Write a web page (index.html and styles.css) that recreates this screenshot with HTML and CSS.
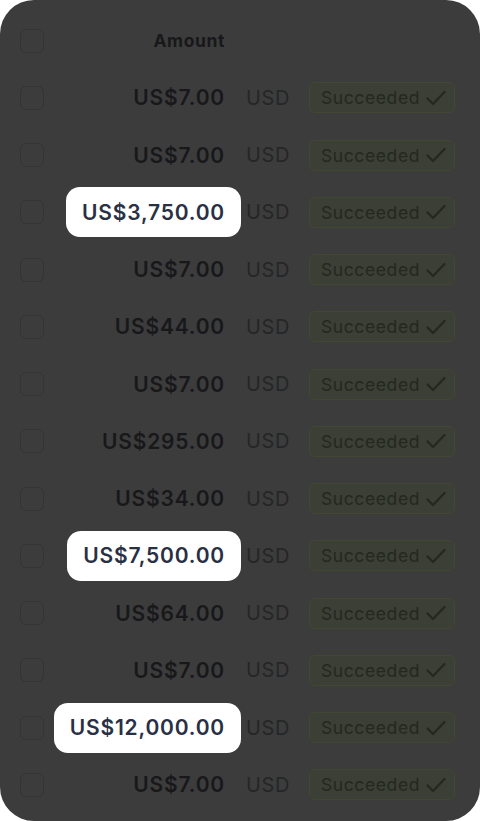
FILE: index.html
```html
<!DOCTYPE html>
<html lang="en">
<head>
  <meta charset="UTF-8" />
  <meta name="viewport" content="width=device-width, initial-scale=1" />
  <title>Payments</title>
  <link rel="stylesheet" href="styles.css">
</head>
<body>
  <div class="sheet">
    <div class="row head">
      <span class="check"></span>
      <span class="amount"><b>Amount</b></span>
      <span></span>
      <span></span>
    </div>

    <div class="row"><span class="check"></span><span class="amount"><b>US$7.00</b></span><span class="cur">USD</span><span class="status">Succeeded <svg class="tick" viewBox="0 0 20 16"><path d="M1.5 8.5 L7 14 L18.5 2"/></svg></span></div>
    <div class="row"><span class="check"></span><span class="amount"><b>US$7.00</b></span><span class="cur">USD</span><span class="status">Succeeded <svg class="tick" viewBox="0 0 20 16"><path d="M1.5 8.5 L7 14 L18.5 2"/></svg></span></div>
    <div class="row"><span class="check"></span><span class="amount"><b class="hl">US$3,750.00</b></span><span class="cur">USD</span><span class="status">Succeeded <svg class="tick" viewBox="0 0 20 16"><path d="M1.5 8.5 L7 14 L18.5 2"/></svg></span></div>
    <div class="row"><span class="check"></span><span class="amount"><b>US$7.00</b></span><span class="cur">USD</span><span class="status">Succeeded <svg class="tick" viewBox="0 0 20 16"><path d="M1.5 8.5 L7 14 L18.5 2"/></svg></span></div>
    <div class="row"><span class="check"></span><span class="amount"><b>US$44.00</b></span><span class="cur">USD</span><span class="status">Succeeded <svg class="tick" viewBox="0 0 20 16"><path d="M1.5 8.5 L7 14 L18.5 2"/></svg></span></div>
    <div class="row"><span class="check"></span><span class="amount"><b>US$7.00</b></span><span class="cur">USD</span><span class="status">Succeeded <svg class="tick" viewBox="0 0 20 16"><path d="M1.5 8.5 L7 14 L18.5 2"/></svg></span></div>
    <div class="row"><span class="check"></span><span class="amount"><b>US$295.00</b></span><span class="cur">USD</span><span class="status">Succeeded <svg class="tick" viewBox="0 0 20 16"><path d="M1.5 8.5 L7 14 L18.5 2"/></svg></span></div>
    <div class="row"><span class="check"></span><span class="amount"><b>US$34.00</b></span><span class="cur">USD</span><span class="status">Succeeded <svg class="tick" viewBox="0 0 20 16"><path d="M1.5 8.5 L7 14 L18.5 2"/></svg></span></div>
    <div class="row"><span class="check"></span><span class="amount"><b class="hl">US$7,500.00</b></span><span class="cur">USD</span><span class="status">Succeeded <svg class="tick" viewBox="0 0 20 16"><path d="M1.5 8.5 L7 14 L18.5 2"/></svg></span></div>
    <div class="row"><span class="check"></span><span class="amount"><b>US$64.00</b></span><span class="cur">USD</span><span class="status">Succeeded <svg class="tick" viewBox="0 0 20 16"><path d="M1.5 8.5 L7 14 L18.5 2"/></svg></span></div>
    <div class="row"><span class="check"></span><span class="amount"><b>US$7.00</b></span><span class="cur">USD</span><span class="status">Succeeded <svg class="tick" viewBox="0 0 20 16"><path d="M1.5 8.5 L7 14 L18.5 2"/></svg></span></div>
    <div class="row"><span class="check"></span><span class="amount"><b class="hl">US$12,000.00</b></span><span class="cur">USD</span><span class="status">Succeeded <svg class="tick" viewBox="0 0 20 16"><path d="M1.5 8.5 L7 14 L18.5 2"/></svg></span></div>
    <div class="row"><span class="check"></span><span class="amount"><b>US$7.00</b></span><span class="cur">USD</span><span class="status">Succeeded <svg class="tick" viewBox="0 0 20 16"><path d="M1.5 8.5 L7 14 L18.5 2"/></svg></span></div>
  </div>
</body>
</html>
```

FILE: styles.css
```css
body {
  margin: 0;
  background: #fff;
  font-family: Inter, "Noto Sans", sans-serif;
}

.sheet {
  width: 480px;
  height: 821px;
  box-sizing: border-box;
  padding-top: 12px;
  background: #3c3c3c;
  border-radius: 34px;
  overflow: hidden;
}

.row {
  display: grid;
  grid-template-columns: 24px 181px 84px 146px;
  align-items: center;
  height: 57.25px;
  padding-left: 20px;
}

.row .cur {
  padding-left: 21px;
  font-size: 20px;
  letter-spacing: 0.6px;
  color: #252628;
}

.check {
  width: 24px;
  height: 24px;
  box-sizing: border-box;
  border: 1.5px solid #343434;
  border-radius: 6px;
}

.amount {
  display: flex;
  justify-content: flex-end;
}

.amount b {
  font-size: 21px;
  font-weight: 600;
  color: #18181b;
  letter-spacing: 0.8px;
}

.head .amount b {
  font-size: 17.5px;
  font-weight: 700;
  letter-spacing: 0.6px;
  color: #18181a;
}

.amount b.hl {
  display: flex;
  align-items: center;
  height: 50px;
  padding: 0 16px;
  margin-right: -16px;
  background: #fff;
  border-radius: 14px;
  color: #2a3044;
}

.status {
  display: flex;
  align-items: center;
  gap: 6px;
  height: 31px;
  box-sizing: border-box;
  padding-left: 11px;
  border: 1px solid #414733;
  border-radius: 6px;
  background: #3b3f35;
  color: #232820;
  font-size: 17.5px;
  letter-spacing: 0.6px;
}

.tick {
  width: 20px;
  height: 16px;
  fill: none;
  stroke: #232820;
  stroke-width: 2.2;
  stroke-linecap: round;
  stroke-linejoin: round;
}
```
